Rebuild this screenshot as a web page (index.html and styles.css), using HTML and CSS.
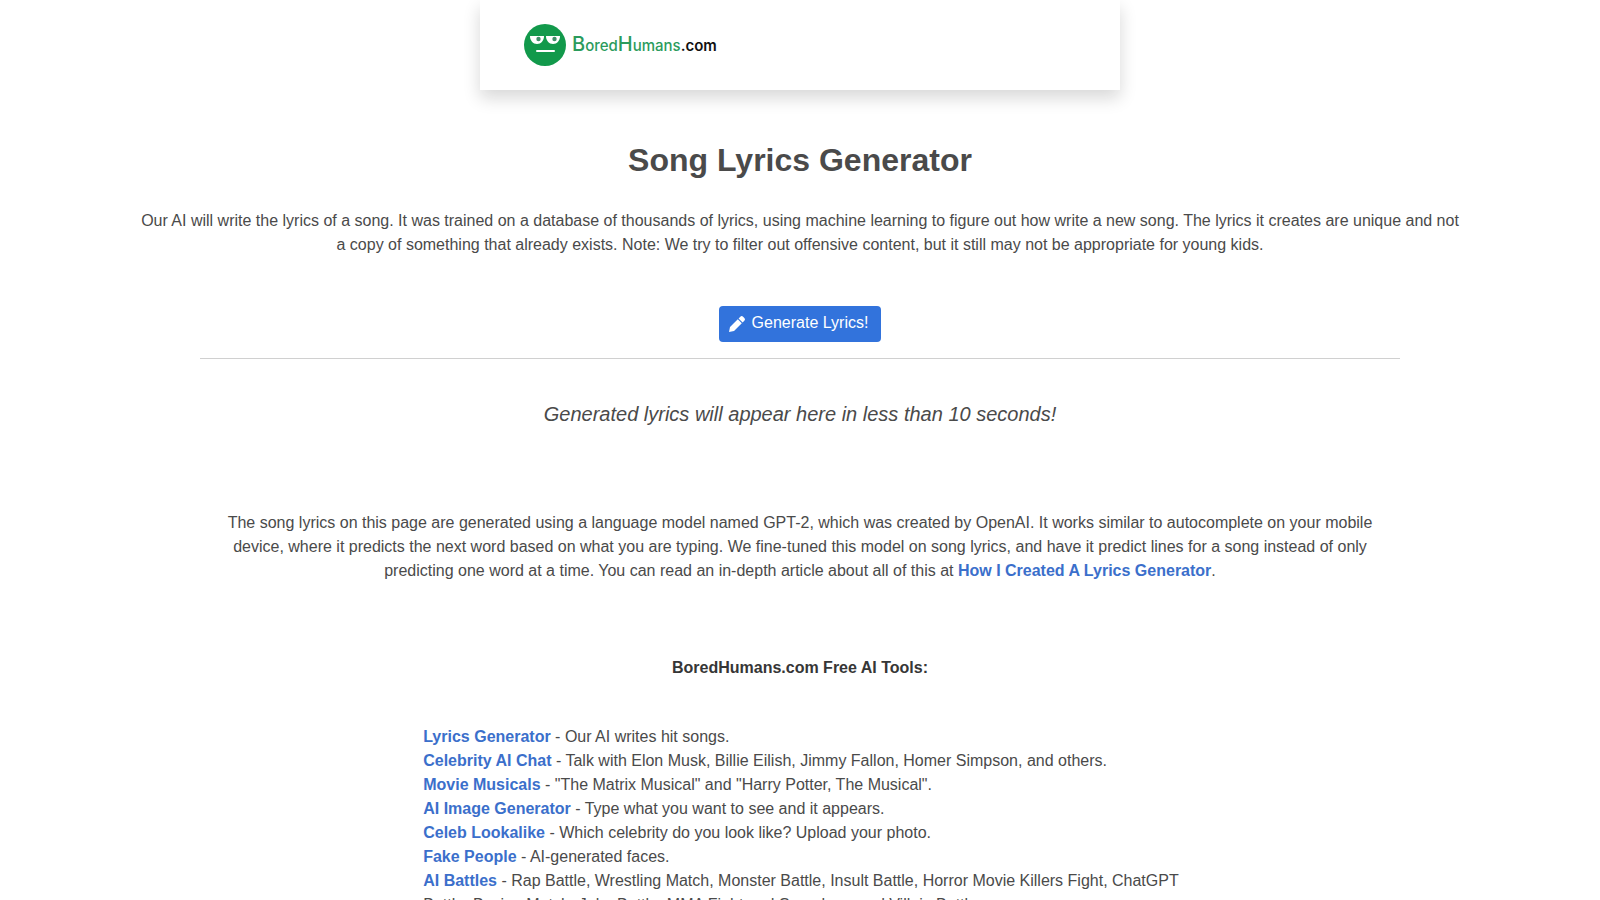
FILE: index.html
```html
<!DOCTYPE html>
<html lang="en">
<head>
<meta charset="utf-8">
<title>Song Lyrics Generator</title>
<link rel="stylesheet" href="styles.css">
</head>
<body>
<header class="site-header">
  <a class="brand" href="#" aria-label="BoredHumans.com">
    <svg class="brand-face" viewBox="0 0 42 42" aria-hidden="true">
      <circle cx="21" cy="21" r="21" fill="#12994b"/>
      <path d="M6 12h14c0 4.500-3 8-7 8s-7-3.500-7-8z" fill="#fff"/>
      <path d="M22 12h14c0 4.500-3 8-7 8s-7-3.500-7-8z" fill="#fff"/>
      <circle cx="14.500" cy="15" r="2.200" fill="#3f8f68"/>
      <circle cx="30.500" cy="15" r="2.200" fill="#3f8f68"/>
      <rect x="12" y="26" width="19" height="2" rx="1" fill="#fff"/>
    </svg>
    <span class="brand-name"><span class="cap">B</span>ored<span class="cap">H</span>umans<span class="tld">.com</span></span>
  </a>
</header>
<main>
  <h1 class="title">Song Lyrics Generator</h1>
  <p class="intro">Our AI will write the lyrics of a song. It was trained on a database of thousands of lyrics, using machine learning to figure out how write a new song. The lyrics it creates are unique and not a copy of something that already exists. Note: We try to filter out offensive content, but it still may not be appropriate for young kids.</p>
  <button class="generate" type="button">
    <svg class="pencil" viewBox="0 0 16 16" aria-hidden="true"><path fill="currentColor" d="M0 16l1-5 7.800-7.800 4 4L5 15zM9.600 2.400L11.300.700a2 2 0 0 1 2.800 0l1.200 1.200a2 2 0 0 1 0 2.800l-1.700 1.700z"/></svg>
    Generate Lyrics!
  </button>
  <hr class="rule">
  <p class="result">Generated lyrics will appear here in less than 10 seconds!</p>
  <p class="about">The song lyrics on this page are generated using a language model named GPT-2, which was created by OpenAI. It works similar to autocomplete on your mobile device, where it predicts the next word based on what you are typing. We fine-tuned this model on song lyrics, and have it predict lines for a song instead of only predicting one word at a time. You can read an in-depth article about all of this at <a href="#">How I Created A Lyrics Generator</a>.</p>
  <h2 class="tools-title">BoredHumans.com Free AI Tools:</h2>
  <ul class="tools">
    <li><a href="#">Lyrics Generator</a> - Our AI writes hit songs.</li>
    <li><a href="#">Celebrity AI Chat</a> - Talk with Elon Musk, Billie Eilish, Jimmy Fallon, Homer Simpson, and others.</li>
    <li><a href="#">Movie Musicals</a> - "The Matrix Musical" and "Harry Potter, The Musical".</li>
    <li><a href="#">AI Image Generator</a> - Type what you want to see and it appears.</li>
    <li><a href="#">Celeb Lookalike</a> - Which celebrity do you look like? Upload your photo.</li>
    <li><a href="#">Fake People</a> - AI-generated faces.</li>
    <li><a href="#">AI Battles</a> - Rap Battle, Wrestling Match, Monster Battle, Insult Battle, Horror Movie Killers Fight, ChatGPT Battle, Boxing Match, Joke Battle, MMA Fight and Superhero and Villain Battle.</li>
  </ul>
</main>
</body>
</html>
```
FILE: styles.css
```css
* { box-sizing: border-box; }
html { overflow: hidden; }
body {
  margin: 0;
  background: #fff;
  color: #4a4a4a;
  font: 16px/24px "Liberation Sans", Arial, sans-serif;
}
p, h1, h2, ul { margin: 0; padding: 0; }
a { color: #3b6fcb; font-weight: 700; text-decoration: none; }
.site-header {
  width: 40%;
  margin: 0 auto;
  padding: 24px 44px;
  box-shadow: 0 8px 16px rgba(10, 10, 10, .16);
}
.brand { display: flex; align-items: center; gap: 6px; height: 42px; }
.brand-face { width: 42px; height: 42px; }
.brand-name {
  color: #2b9b5c;
  font: 500 15px/24px Inter, sans-serif;
}
.cap { font-size: 20px; }
.tld { color: #111; font-weight: 600; }
main { display: flex; flex-direction: column; align-items: center; }
.title { margin-top: 48px; font-size: 32px; line-height: 44px; }
.intro { width: 83%; margin-top: 27px; text-align: center; }
.generate {
  display: flex;
  align-items: center;
  gap: 7px;
  height: 36px;
  margin-top: 49px;
  padding: 0 13px 2px 10px;
  border: 0;
  border-radius: 4px;
  background: #3273dc;
  color: #fff;
  font: inherit;
}
.pencil { width: 16px; height: 16px; margin-top: 2px; }
.rule { width: 75%; height: 1px; margin: 16px 0 0; border: 0; background: #d0d0d0; }
.result { margin-top: 40px; font-size: 20px; line-height: 30px; font-style: italic; }
.about { width: 73%; margin-top: 82px; text-align: center; }
.tools-title { margin-top: 73px; color: #363636; font-size: 16px; line-height: 24px; }
.tools { align-self: stretch; margin: 45px 24% 0 26.450%; list-style: none; }
```
